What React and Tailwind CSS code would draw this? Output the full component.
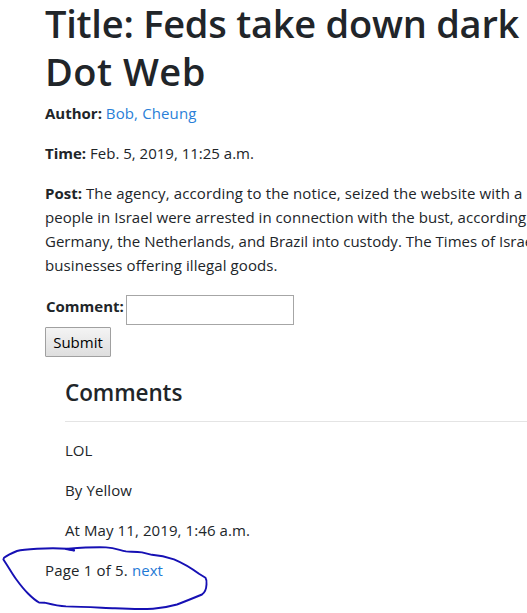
const postLines = [
  { text: "people in Israel were arrested in connection with the bust, according", spacing: "tracking-[0.045px]" },
  { text: "Germany, the Netherlands, and Brazil into custody. The Times of Israel", spacing: "tracking-[0.01px]" },
  { text: "businesses offering illegal goods.", spacing: "tracking-[0.08px]" },
];

function PenCircle() {
  return (
    <svg
      className="pointer-events-none absolute left-0 top-[540px]"
      width="220"
      height="73"
      viewBox="0 540 220 73"
      fill="none"
      stroke="#1610b4"
      strokeWidth="1.9"
      strokeLinecap="round"
      strokeLinejoin="round"
    >
      <path d="M74 550.3 L67 548.7 C56 548 46 548.2 37 548.8 C29 549.3 22 549.8 17 551 C12 553 7 555.5 4 557.7 L3.4 559.5 L6 563.5 C9 568 12 573.5 16 579 C20 584.5 24 589.5 28 593.5 C32 597.5 35.5 600.5 39 602.5 L45 602.8 C52 604.5 58 606 66 606.4 C82 606.8 98 607.6 115 608.3 C129 609 143 609.3 153 608.7 C162 608 170 606.5 177 604.5 C185 601.5 194 597.8 202 594.5 C205 592.5 206.3 588.5 206.5 584.5 C206.8 581.5 206.6 579.5 205.5 577.8 L199 573.8 C192 568.5 184 563.5 174 559.3 C166 556.8 160 555.5 152 554.8 L142 552.4 C136 551.6 130 551.8 126 551.4 C119 550 115 547.9 106 547.4 C94 547 80 547.8 68 548.6" />
      <path d="M66 549 L74 550.3" strokeWidth="2.2" />
    </svg>
  );
}

export default function App() {
  return (
    <div className="relative h-[613px] w-[527px] overflow-hidden bg-white pl-[45px] font-['Open_Sans','Noto_Sans',sans-serif] text-[15px] leading-6 text-[#212529]">
      <h1 className="-mt-px mb-1.5 whitespace-nowrap text-[38px] font-semibold leading-[48px]">
        <span className="tracking-[-0.24px]">Title: Feds take down dark</span>
        <br />
        <span className="tracking-[0.5px]">Dot Web</span>
      </h1>
      <p className="mb-4 whitespace-nowrap">
        <b>Author:</b> <a className="tracking-[0.12px] text-[#2a7fd8]">Bob, Cheung</a>
      </p>
      <p className="mb-4 whitespace-nowrap">
        <b>Time:</b> Feb. 5, 2019, 11:25 a.m.
      </p>
      <div className="mb-[17px] whitespace-nowrap">
        <div className="tracking-[0.12px]">
          <b className="tracking-normal">Post:</b> The agency, according to the notice, seized the website with a
        </div>
        {postLines.map((line) => (
          <div key={line.text} className={line.spacing}>{line.text}</div>
        ))}
      </div>
      <form className="mb-[21px]">
        <div className="flex">
          <label className="w-[81px] pl-px font-bold">Comment:</label>
          <input className="mt-px h-[30px] w-[168px] border border-[#a6a6a6] bg-white outline-none" />
        </div>
        <button
          type="button"
          className="mt-0.5 block h-[30px] w-[66px] rounded-[1px] border border-[#a0a0a0] bg-linear-to-b from-[#f4f4f4] to-[#dedede] text-black"
        >
          Submit
        </button>
      </form>
      <section className="pl-5">
        <h4 className="text-[22.5px] font-semibold leading-[29px] tracking-[-0.1px]">Comments</h4>
        <hr className="mb-4 mt-[14px] border-[#e4e4e4]" />
        <p className="mb-4">LOL</p>
        <p className="mb-4 tracking-[0.1px]">By Yellow</p>
        <p className="mb-4 tracking-[0.09px]">At May 11, 2019, 1:46 a.m.</p>
      </section>
      <div className="tracking-[0.18px]">
        Page 1 of 5. <a className="tracking-normal text-[#1f7ad6]">next</a>
      </div>
      <PenCircle />
    </div>
  );
}
